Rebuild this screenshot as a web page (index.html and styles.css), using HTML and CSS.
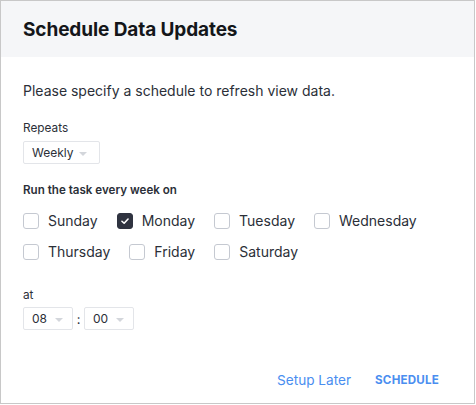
FILE: index.html
```html
<!DOCTYPE html>
<html>
<head>
<meta charset="utf-8">
<link rel="stylesheet" href="styles.css">
</head>
<body>
<div class="dialog">
  <div class="header"><h1 class="title">Schedule Data Updates</h1></div>
  <div class="body">
    <p class="intro">Please specify a schedule to refresh view data.</p>
    <div class="label">Repeats</div>
    <div class="select select-weekly"><span>Weekly</span><span class="caret"></span></div>
    <div class="label label-strong">Run the task every week on</div>
    <div class="days">
      <div class="day-row">
        <label class="day"><span class="box"></span>Sunday</label>
        <label class="day"><span class="box checked"><svg viewBox="0 0 16 16" width="16" height="16"><path d="M4.5 8.3 L7 10.6 L11.5 5.8" fill="none" stroke="#fff" stroke-width="1.8" stroke-linecap="round" stroke-linejoin="round"/></svg></span>Monday</label>
        <label class="day"><span class="box"></span>Tuesday</label>
        <label class="day"><span class="box"></span>Wednesday</label>
      </div>
      <div class="day-row">
        <label class="day"><span class="box"></span>Thursday</label>
        <label class="day"><span class="box"></span>Friday</label>
        <label class="day"><span class="box"></span>Saturday</label>
      </div>
    </div>
    <div class="label label-at">at</div>
    <div class="time">
      <div class="select select-time"><span>08</span><span class="caret"></span></div>
      <span class="colon">:</span>
      <div class="select select-time"><span>00</span><span class="caret"></span></div>
    </div>
  </div>
  <div class="footer">
    <button class="btn btn-link">Setup Later</button>
    <button class="btn btn-primary">SCHEDULE</button>
  </div>
</div>
</body>
</html>
```

FILE: styles.css
```css
* { box-sizing: border-box; }
html, body { margin: 0; padding: 0; background: #fff; }
body { font-family: Inter, "Noto Sans", sans-serif; color: #2b2f38; }
.dialog {
  width: 475px;
  height: 404px;
  border: 1px solid #c8c8c8;
  display: flex;
  flex-direction: column;
  background: #fff;
}
.header {
  height: 56px;
  background: #f5f6f8;
  display: flex;
  align-items: center;
  padding-left: 22px;
}
.title {
  margin: 0;
  font-size: 19px;
  font-weight: 700;
  color: #14161a;
  letter-spacing: -0.1px;
}
.body {
  flex: 1;
  padding: 25px 22px 0;
}
.intro {
  margin: 0;
  font-size: 14px;
  line-height: 18px;
  color: #2b2f38;
}
.label {
  font-size: 11.8px;
  line-height: 16px;
  margin-top: 20px;
  color: #2b2f38;
}
.label-strong { font-weight: 600; margin-top: 18px; font-size: 11.6px; }
.label-at { margin-top: 26px; }
.select {
  display: inline-flex;
  align-items: center;
  height: 23px;
  border: 1px solid #e3e5e9;
  border-radius: 2px;
  padding: 0 8px 0 8px;
  font-size: 12px;
  color: #2b2f38;
  margin-top: 5px;
  justify-content: space-between;
}
.select-weekly { width: 77px; padding-right: 12px; }
.select-time { width: 50px; margin-top: 0; padding-right: 9px; }
.caret {
  width: 0; height: 0;
  border-left: 4px solid transparent;
  border-right: 4px solid transparent;
  border-top: 4px solid #d3d6db;
  margin-top: 2px;
}
.days { margin-top: 13px; display: flex; flex-direction: column; gap: 12px; }
.day-row { display: flex; gap: 0; }
.day {
  display: inline-flex;
  align-items: center;
  font-size: 14px;
  line-height: 19px;
  color: #2b2f38;
  gap: 9px;
}
.day-row .day { margin-right: 19px; }
.box {
  width: 16px; height: 16px;
  border: 1px solid #c5c9d1;
  border-radius: 3px;
  display: inline-flex;
  align-items: center;
  justify-content: center;
}
.box.checked { background: #2f3340; border-color: #2f3340; }
.box svg { display: block; }
.time { display: flex; align-items: center; margin-top: 4px; }
.colon { width: 11px; text-align: center; font-size: 13px; }
.footer {
  height: 46px;
  display: flex;
  justify-content: flex-end;
  align-items: center;
  padding-right: 35px;
  gap: 24px;
}
.btn {
  background: none;
  border: none;
  padding: 0;
  font-family: Inter, "Noto Sans", sans-serif;
  color: #4a8ef0;
  cursor: pointer;
}
.btn-link { font-size: 13.6px; }
.btn-primary { font-size: 11.6px; font-weight: 700; letter-spacing: 0.2px; }
```
